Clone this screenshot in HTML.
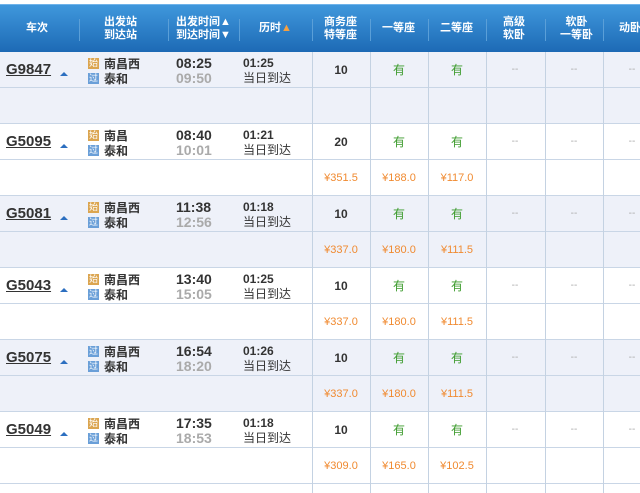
<!DOCTYPE html>
<html><head><meta charset="utf-8"><style>
body{margin:0;width:640px;height:493px;overflow:hidden;background:#fff;font-family:"Liberation Sans","Noto Sans CJK SC",sans-serif;}
.hd{position:absolute;left:0;top:4px;width:640px;height:48px;background:linear-gradient(#3f97dc,#1d6ab5);border-top:1px solid #6fb3ea;box-sizing:border-box;overflow:hidden;}
.hd div{position:absolute;color:#fff;font-size:11px;font-weight:bold;line-height:13px;text-align:center;top:11px;white-space:nowrap;}
.sep{position:absolute;top:14px;width:1px;height:22px;background:#5a9fd8;}
.row{position:absolute;left:0;width:640px;height:36px;border-bottom:1px solid #c9d6e6;box-sizing:border-box;}
.l{background:#eef1f9}
.vl{position:absolute;top:52px;width:1px;height:441px;background:#c4d2e2;}
.t{position:absolute;font-size:13px;}
.code{left:6px;top:9px;font-size:15px;font-weight:bold;color:#333;text-decoration:underline;}
.tri{position:absolute;left:60px;top:20px;width:0;height:0;border-left:4px solid transparent;border-right:4px solid transparent;border-bottom:4px solid #2c6fc0;}
.ic{position:absolute;left:88px;width:11px;height:11px;font-size:9px;line-height:11px;color:#fff;text-align:center;}
.st{position:absolute;left:104px;font-size:12px;font-weight:bold;color:#333;line-height:14px;}
.tm{position:absolute;left:176px;font-size:14px;font-weight:bold;line-height:15px;}
.du{position:absolute;left:243px;font-size:12px;color:#333;line-height:15px;}
.c{position:absolute;width:58px;text-align:center;font-size:12px;line-height:36px;top:0;}
</style></head><body>
<div class="hd">
<div style="left:26px;top:17px">车次</div>
<div style="left:104px">出发站<br>到达站</div>
<div style="left:176px">出发时间▲<br>到达时间▼</div>
<div style="left:259px;top:17px">历时<span style="color:#f5a040">▲</span></div>
<div style="left:324px">商务座<br>特等座</div>
<div style="left:382px;top:17px">一等座</div>
<div style="left:440px;top:17px">二等座</div>
<div style="left:503px">高级<br>软卧</div>
<div style="left:560px">软卧<br>一等卧</div>
<div style="left:619px;top:17px">动卧</div>
<span class="sep" style="left:79px"></span><span class="sep" style="left:168px"></span><span class="sep" style="left:239px"></span><span class="sep" style="left:312px"></span><span class="sep" style="left:370px"></span><span class="sep" style="left:428px"></span><span class="sep" style="left:486px"></span><span class="sep" style="left:545px"></span><span class="sep" style="left:603px"></span>
</div>
<div id="rows"></div>
<script>
var d=[["G9847","南昌西","08:25","09:50","01:25",null],
["G5095","南昌","08:40","10:01","01:21",["¥351.5","¥188.0","¥117.0"]],
["G5081","南昌西","11:38","12:56","01:18",["¥337.0","¥180.0","¥111.5"]],
["G5043","南昌西","13:40","15:05","01:25",["¥337.0","¥180.0","¥111.5"]],
["G5075","南昌西","16:54","18:20","01:26",["¥337.0","¥180.0","¥111.5"]],
["G5049","南昌西","17:35","18:53","01:18",["¥309.0","¥165.0","¥102.5"]]];
var h="";
var cx=[312,370,428,486,545,603];
d.forEach(function(r,i){var y=52+i*72,cl=i%2==0?"row l":"row";
var s1=(i==4)?["过","#6a9fd8"]:["始","#dba550"];
h+='<div class="'+cl+'" style="top:'+y+'px">'+
'<span class="t code">'+r[0]+'</span><span class="tri"></span>'+
'<span class="ic" style="top:6px;background:'+s1[1]+'">'+s1[0]+'</span><span class="st" style="top:5px">'+r[1]+'</span>'+
'<span class="ic" style="top:21px;background:#6a9fd8">过</span><span class="st" style="top:20px">泰和</span>'+
'<span class="tm" style="top:4px;color:#333">'+r[2]+'</span><span class="tm" style="top:19px;color:#aaa">'+r[3]+'</span>'+
'<span class="du" style="top:4px;font-weight:bold">'+r[4]+'</span><span class="du" style="top:19px">当日到达</span>'+
'<span class="c" style="left:312px;font-weight:bold;color:#333">'+(i==1?"20":"10")+'</span>'+
'<span class="c" style="left:370px;color:#3a9a2a">有</span><span class="c" style="left:428px;color:#3a9a2a">有</span>'+
'<span class="c" style="left:486px;color:#aaa;font-size:10px">--</span><span class="c" style="left:545px;color:#aaa;font-size:10px">--</span><span class="c" style="left:603px;color:#aaa;font-size:10px">--</span></div>';
h+='<div class="'+cl+'" style="top:'+(y+36)+'px">';
if(r[5])r[5].forEach(function(p,j){h+='<span class="c" style="left:'+cx[j]+'px;color:#f08a30;font-size:11px">'+p+'</span>';});
h+='</div>';});
cx.forEach(function(x){h+='<div class="vl" style="left:'+x+'px"></div>';});
document.getElementById("rows").innerHTML=h;
</script>
</body></html>
